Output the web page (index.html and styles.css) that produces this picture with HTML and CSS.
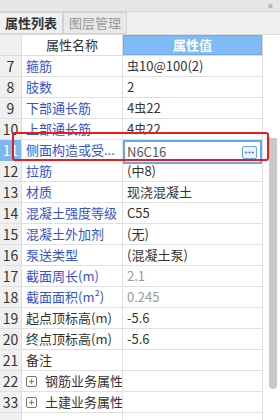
FILE: index.html
```html
<!DOCTYPE html>
<html lang="zh-CN">

<head>
    <meta charset="UTF-8">
    <meta name="viewport" content="width=device-width, initial-scale=1.0">
    <title>属性列表</title>
    <link rel="stylesheet" href="styles.css">
</head>

<body>
    <div class="title-bar">
        <span class="close">&#x2715;</span>
    </div>
    <div class="tabs">
        <div class="tab active">属性列表</div>
        <div class="tab">图层管理</div>
    </div>

    <div class="panel">
        <div class="grid">
            <div class="row head">
                <div class="num"></div>
                <div class="name">属性名称</div>
                <div class="value">属性值</div>
            </div>
            <div class="row">
                <div class="num">7</div>
                <div class="name link">箍筋</div>
                <div class="value"><span class="bar">虫</span>10@100(2)</div>
            </div>
            <div class="row">
                <div class="num">8</div>
                <div class="name link">肢数</div>
                <div class="value">2</div>
            </div>
            <div class="row">
                <div class="num">9</div>
                <div class="name link">下部通长筋</div>
                <div class="value">4<span class="bar">虫</span>22</div>
            </div>
            <div class="row">
                <div class="num">10</div>
                <div class="name link">上部通长筋</div>
                <div class="value">4<span class="bar">虫</span>22</div>
            </div>
            <div class="row selected">
                <div class="num">11</div>
                <div class="name link">侧面构造或受...</div>
                <div class="value editing">
                    <span>N6C16</span>
                    <span class="more">
                        <svg width="9" height="3" viewBox="0 0 9 3">
                            <circle cx="1.2" cy="1.5" r="1.1" fill="#3f7fd6"/>
                            <circle cx="4.5" cy="1.5" r="1.1" fill="#3f7fd6"/>
                            <circle cx="7.8" cy="1.5" r="1.1" fill="#3f7fd6"/>
                        </svg>
                    </span>
                </div>
                <div class="mark"></div>
            </div>
            <div class="row">
                <div class="num">12</div>
                <div class="name link">拉筋</div>
                <div class="value">(中8)</div>
            </div>
            <div class="row">
                <div class="num">13</div>
                <div class="name link">材质</div>
                <div class="value">现浇混凝土</div>
            </div>
            <div class="row">
                <div class="num">14</div>
                <div class="name link">混凝土强度等级</div>
                <div class="value">C55</div>
            </div>
            <div class="row">
                <div class="num">15</div>
                <div class="name link">混凝土外加剂</div>
                <div class="value">(无)</div>
            </div>
            <div class="row">
                <div class="num">16</div>
                <div class="name link">泵送类型</div>
                <div class="value">(混凝土泵)</div>
            </div>
            <div class="row">
                <div class="num">17</div>
                <div class="name link">截面周长(m)</div>
                <div class="value muted">2.1</div>
            </div>
            <div class="row">
                <div class="num">18</div>
                <div class="name link">截面面积(m²)</div>
                <div class="value muted">0.245</div>
            </div>
            <div class="row">
                <div class="num">19</div>
                <div class="name">起点顶标高(m)</div>
                <div class="value">-5.6</div>
            </div>
            <div class="row">
                <div class="num">20</div>
                <div class="name">终点顶标高(m)</div>
                <div class="value">-5.6</div>
            </div>
            <div class="row">
                <div class="num">21</div>
                <div class="name">备注</div>
                <div class="value"></div>
            </div>
            <div class="row">
                <div class="num">22</div>
                <div class="name"><span class="plus">+</span>钢筋业务属性</div>
                <div class="value"></div>
            </div>
            <div class="row">
                <div class="num">33</div>
                <div class="name"><span class="plus">+</span>土建业务属性</div>
                <div class="value"></div>
            </div>
            <div class="row last">
                <div class="num"></div>
                <div class="name"><span class="plus"></span></div>
                <div class="value"></div>
            </div>
        </div>
        <div class="scroll">
            <div class="thumb"></div>
        </div>
    </div>
</body>

</html>
```

FILE: styles.css
```css
body {
    margin: 0;
    width: 280px;
    height: 420px;
    overflow: hidden;
    background-color: #fff;
    font-family: "Noto Sans CJK SC", "Noto Sans", sans-serif;
    font-size: 13px;
    color: #333;
}

.title-bar {
    height: 11px;
    background-color: #e6e6e6;
    border-bottom: 1px solid #d6d6d6;
    display: flex;
    justify-content: flex-end;
    align-items: center;
    padding-right: 6px;
}

.close {
    font-size: 8px;
    color: #999;
    line-height: 11px;
}

.tabs {
    height: 22px;
    display: flex;
    background-color: #f0f0f0;
    border-bottom: 1px solid #dcdcdc;
}

.tab {
    padding: 0 5px;
    line-height: 20px;
    font-size: 13px;
    color: #999;
    border: 1px solid #d2d2d2;
    background-color: #e9e9e9;
}

.tab.active {
    color: #333;
    font-weight: bold;
    background-color: #f0f0f0;
    border-left: none;
}

.panel {
    display: flex;
    width: 280px;
}

.grid {
    flex: none;
    width: 262px;
    border-right: 1px solid #dcdcdc;
}

.row {
    position: relative;
    display: grid;
    grid-template-columns: 22px 101px 139px;
    height: 21px;
    line-height: 20px;
    border-bottom: 1px solid #e0e0e0;
    box-sizing: border-box;
}

.num {
    background-color: #f0f0f0;
    border-right: 1px solid #dcdcdc;
    text-align: center;
    font-size: 14px;
    color: #333;
}

.name {
    padding-left: 4px;
    border-right: 1px solid #e0e0e0;
    white-space: nowrap;
    overflow: hidden;
}

.name.link {
    color: #3552d2;
}

.value {
    padding-left: 4px;
    white-space: nowrap;
}

.value.muted {
    color: #999;
}

.bar {
    font-size: 12px;
}

.head {
    border-bottom: 1px solid #dcdcdc;
}

.head .name {
    text-align: center;
    padding-left: 0;
}

.head .value {
    background-color: #80bbf7;
    border: 1px solid #6fa9e8;
    color: #fff;
    font-weight: bold;
    text-align: center;
    padding-left: 0;
    line-height: 18px;
}

.selected .num {
    background-color: #7eb6f1;
    color: #fff;
}

.value.editing {
    display: flex;
    justify-content: space-between;
    align-items: center;
    border: 2px solid #6aa6ea;
    padding: 0 3px 0 2px;
    margin-bottom: -1px;
    color: #555;
}

.more {
    display: flex;
    justify-content: center;
    align-items: center;
    width: 13px;
    height: 11px;
    border: 1px solid #6aa6ea;
    border-radius: 2px;
    background-color: #eef4fd;
}

.mark {
    position: absolute;
    left: 12px;
    top: -8px;
    width: 253px;
    height: 25px;
    border: 2px solid #ec1b1b;
    border-radius: 3px;
    pointer-events: none;
}

.plus {
    display: inline-block;
    width: 9px;
    height: 9px;
    line-height: 8px;
    margin-right: 8px;
    border: 1px solid #777;
    border-radius: 2px;
    font-size: 10px;
    text-align: center;
    vertical-align: 1px;
    color: #555;
}

.last .plus {
    vertical-align: -12px;
}

.scroll {
    flex: none;
    width: 17px;
}

.thumb {
    width: 8px;
    height: 251px;
    margin: 103px 0 0 6px;
    background-color: #c9c9c9;
    border-radius: 0 0 4px 4px;
}
```
